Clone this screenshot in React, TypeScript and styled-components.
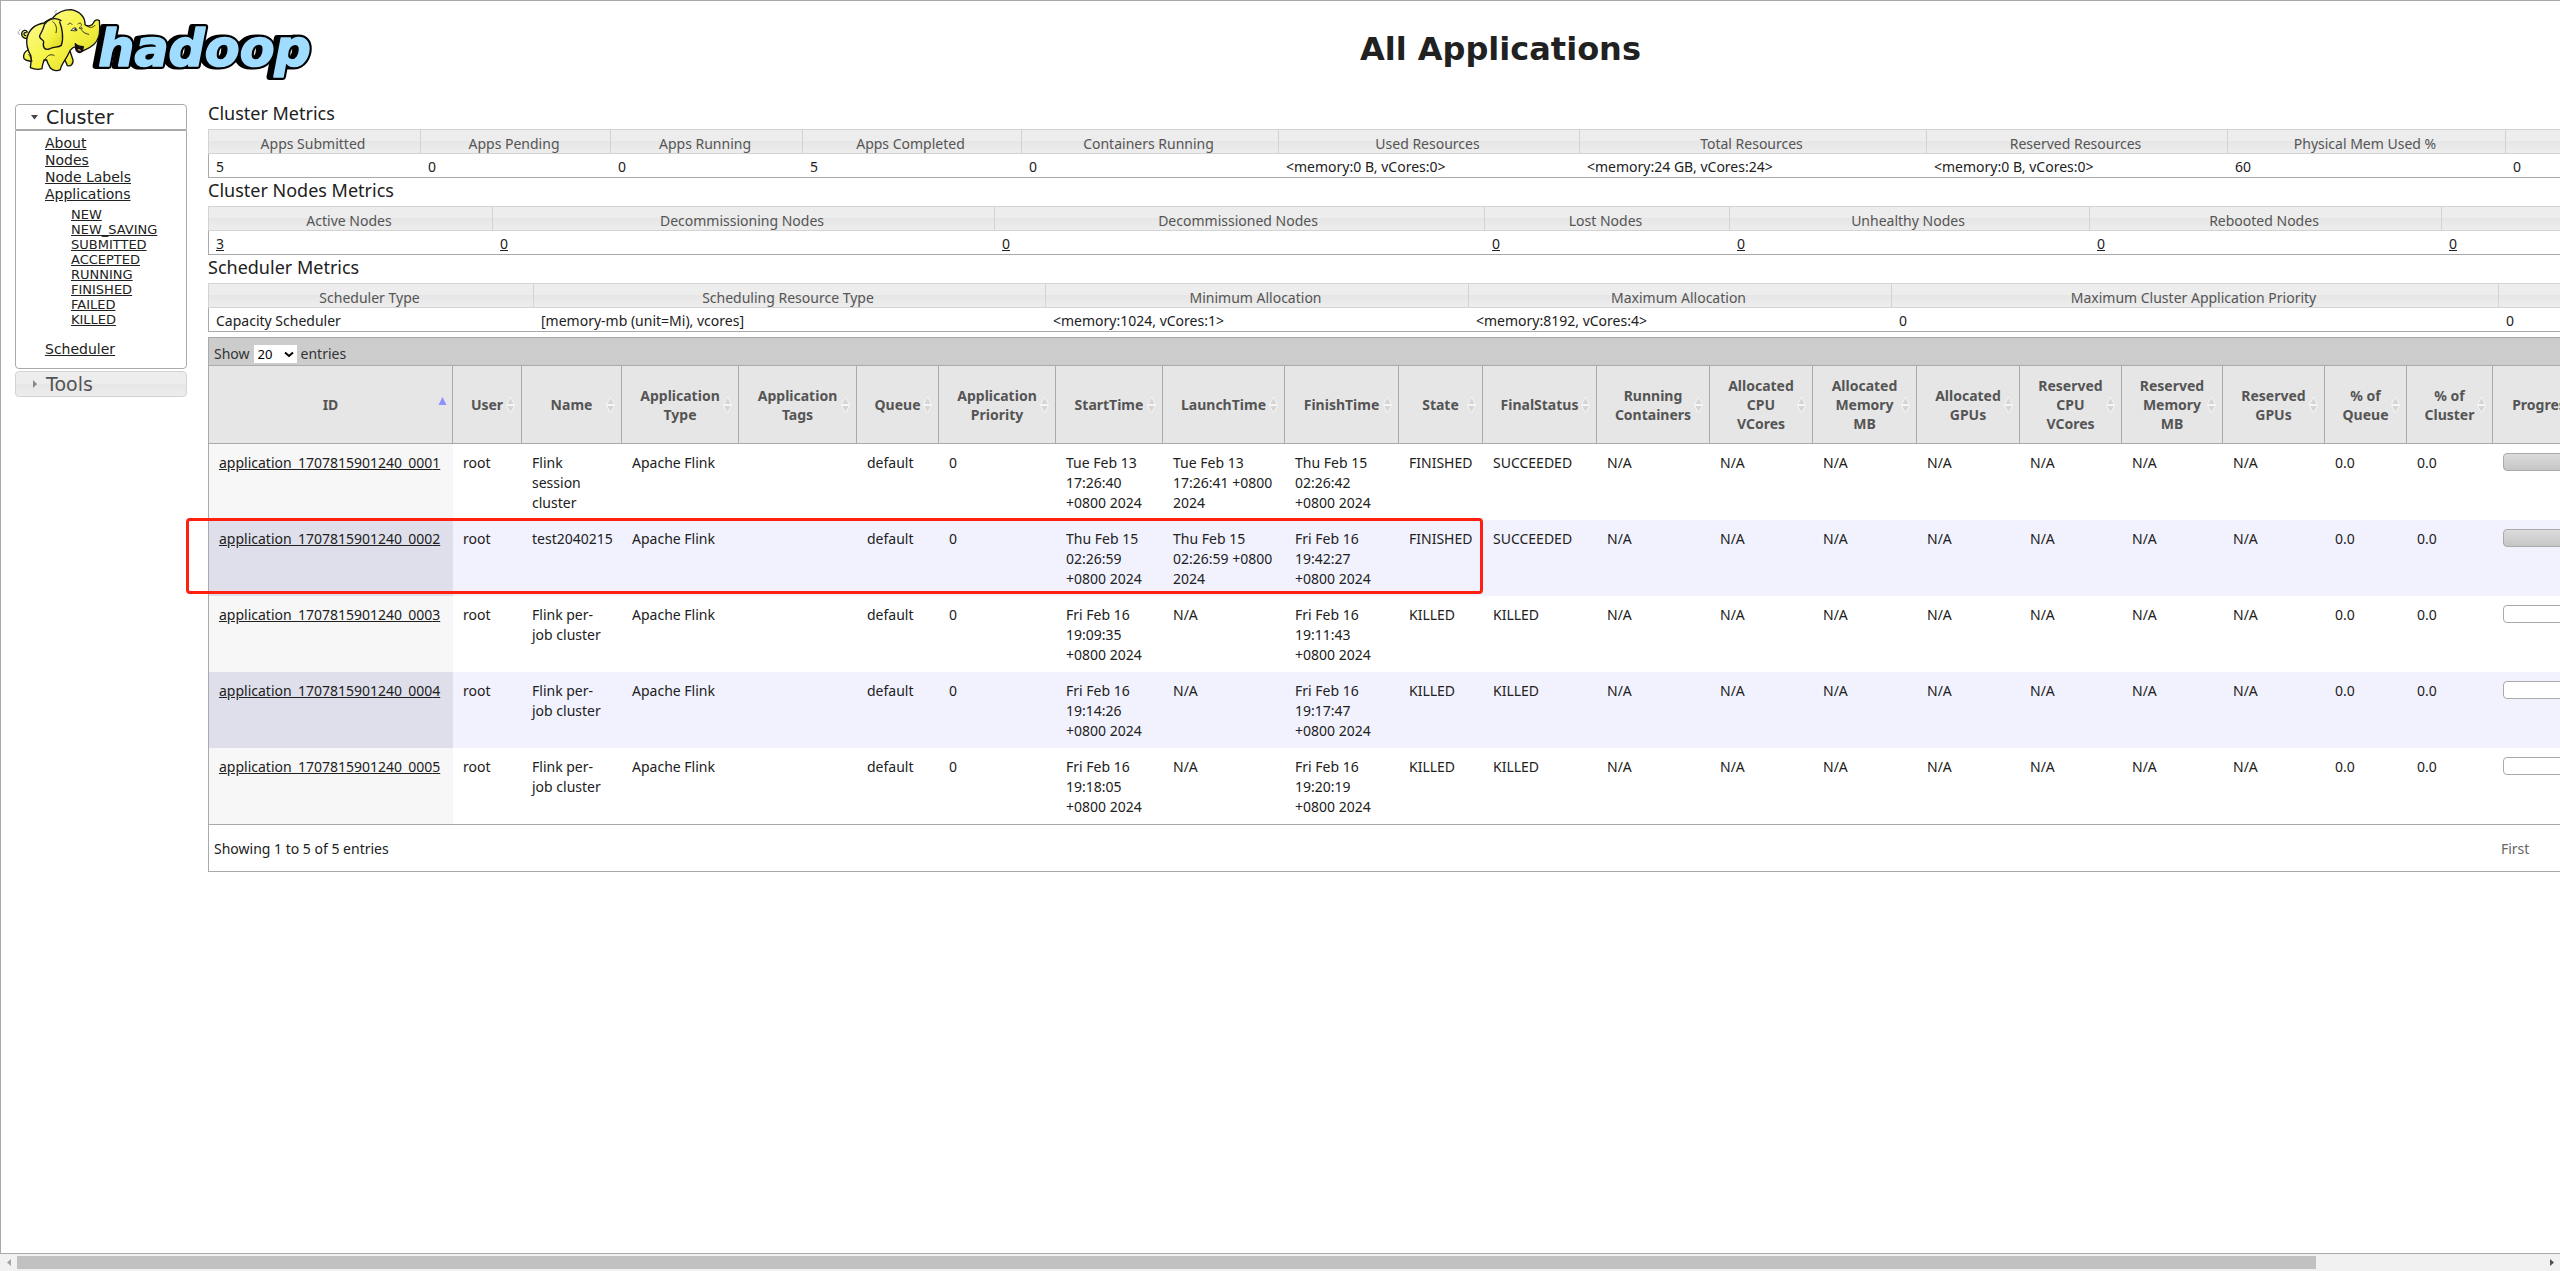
import React from "react";
import styled, { createGlobalStyle } from "styled-components";

const uiFont = `"Noto Sans", "Open Sans", sans-serif`;
const wideFont = `"DejaVu Sans", Verdana, sans-serif`;

const GlobalStyle = createGlobalStyle`
  *, *::before, *::after { box-sizing: border-box; }
  body { margin: 0; background: #fff; color: #212121; font: 14px/20px ${uiFont}; }
  a { color: inherit; }
`;

const Window = styled.div`
  display: flex;
  flex-direction: column;
  height: 100vh;
  overflow: hidden;
`;

const Viewport = styled.div`
  flex: 1;
  min-height: 0;
  overflow: hidden;
  border: solid #aaa;
  border-width: 1px 0 1px 1px;
`;

const Sheet = styled.div`
  width: 110%;
`;

const Header = styled.header`
  display: flex;
  height: 100px;
`;

const Title = styled.h1`
  flex: 1;
  margin: 29px 0 0 -144px;
  text-align: center;
  font: bold 32px/38px ${wideFont};
`;

const Columns = styled.div`
  display: flex;
  align-items: flex-start;
  gap: 21px;
  padding: 0 14px;
`;

const Sidebar = styled.nav`
  flex: none;
  width: 172px;
  padding-top: 3px;
  font-family: ${wideFont};
`;

const glass = `linear-gradient(#ededed 50%, #e6e6e6 50%, #ededed)`;

const NavHeading = styled.button<{ $open?: boolean }>`
  display: flex;
  align-items: center;
  gap: 7px;
  width: 100%;
  height: 26px;
  padding: 0 0 0 14px;
  border: 1px solid ${(p) => (p.$open ? "#aaa" : "#d3d3d3")};
  border-radius: ${(p) => (p.$open ? "4px 4px 0 0" : "4px")};
  background: ${(p) => (p.$open ? "#fff" : glass)};
  color: ${(p) => (p.$open ? "#212121" : "#555")};
  font: 19px/24px ${wideFont};
  text-align: left;
`;

const NavBody = styled.div`
  height: 239px;
  margin-bottom: 2px;
  padding: 4px 0 0 29px;
  border: 1px solid #aaa;
  border-radius: 0 0 4px 4px;
  font-size: 14px;
  line-height: 17px;
`;

const NavList = styled.ul`
  margin: 0;
  padding: 0;
  list-style: none;
`;

const StateList = styled(NavList)`
  padding: 4px 0 14px 26px;
  font-size: 13px;
  line-height: 15px;
`;

const Main = styled.main`
  flex: 1;
  min-width: 0;
`;

const SectionTitle = styled.h2`
  margin: 0 0 4px;
  font: 18px/24px ${uiFont};
`;

const MetricTable = styled.table`
  width: 100%;
  table-layout: fixed;
  border-collapse: separate;
  border-spacing: 0;
`;

const MetricHead = styled.th`
  height: 25px;
  padding: 4px 3px 0 0;
  border: solid #d3d3d3;
  border-width: 1px 1px 1px 0;
  background: ${glass};
  color: #555;
  font-weight: normal;
  line-height: 19px;
  &:first-child { border-left-width: 1px; }
`;

const MetricCell = styled.td`
  height: 24px;
  padding: 3px 7px 0;
  border-bottom: 1px solid #aaa;
  line-height: 20px;
  white-space: nowrap;
  &:first-child { border-left: 1px solid #aaa; }
`;

const Panel = styled.section`
  position: relative;
  margin-top: 5px;
  border: 1px solid #aaa;
`;

const Toolbar = styled.div`
  display: flex;
  align-items: center;
  gap: 4px;
  height: 27px;
  padding: 5px 5px 0;
  background: #ccc;
  color: #333;
`;

const SelectBox = styled.span`
  display: flex;
  align-items: center;
  width: 43px;
  height: 18px;
  background: #fff;
`;

const Select = styled.select`
  appearance: none;
  width: 30px;
  height: 18px;
  padding: 0 0 0 4px;
  border: 0;
  background: transparent;
  color: #000;
  font: 13px/18px ${uiFont};
`;

const AppTable = styled.table`
  width: 100%;
  table-layout: fixed;
  border-collapse: separate;
  border-spacing: 0;
`;

const AppHead = styled.th`
  position: relative;
  height: 79px;
  padding: 0;
  border: solid #aaa;
  border-width: 1px 1px 1px 0;
  background: #e6e6e6;
  color: #555;
  font-weight: bold;
  line-height: 19px;
  white-space: pre-line;
`;

const SortMark = styled.span`
  position: absolute;
  top: 0;
  right: 5px;
  bottom: 0;
  display: flex;
  align-items: center;
`;

const AppRow = styled.tr`
  &:nth-child(even) { background: #f2f2ff; }
  & > td:first-child { background: #f7f7f7; }
  &:nth-child(even) > td:first-child { background: #dfdfeb; }
`;

const AppCell = styled.td`
  height: 76px;
  padding: 9px 10px 7px;
  vertical-align: top;
  white-space: pre-line;
`;

const Progress = styled.div<{ $done: boolean }>`
  width: 80px;
  height: 18px;
  border: 1px solid #aaa;
  border-radius: 4px;
  background: ${(p) => (p.$done ? "linear-gradient(#dcdcdc, #c6c6c6)" : "#fff")};
`;

const Footer = styled.div`
  display: flex;
  align-items: center;
  justify-content: space-between;
  height: 47px;
  padding: 2px 5px 0;
  border-top: 1px solid #aaa;
`;

const Pager = styled.div`
  width: 295px;
`;

const PageButton = styled.button`
  padding: 0;
  border: 0;
  background: none;
  color: #666;
  font: 14px/20px ${uiFont};
`;

const Highlight = styled.div`
  position: absolute;
  top: 180px;
  left: -23px;
  width: 1297px;
  height: 76px;
  border: 3px solid #ff2010;
  border-radius: 4px;
  pointer-events: none;
`;

const ScrollBar = styled.div`
  display: flex;
  align-items: center;
  flex: none;
  height: 17px;
  background: #f1f1f1;
`;

const ScrollTrack = styled.div`
  flex: 1;
  height: 13px;
`;

const ScrollThumb = styled.div`
  width: 91%;
  height: 100%;
  background: #c1c1c1;
`;

const ScrollArrow = styled.button`
  display: flex;
  align-items: center;
  justify-content: center;
  width: 17px;
  height: 17px;
  padding: 0;
  border: 0;
  background: none;
`;

function Logo() {
  const word = {
    fontFamily: "DejaVu Sans, sans-serif",
    fontSize: 152,
    fontWeight: "bold",
    fontStyle: "italic",
    strokeLinejoin: "round" as const,
  };
  return (
    <svg width="328" height="84" viewBox="3 3 984 252" role="img" aria-label="Hadoop">
      <defs>
        <linearGradient id="hide" x1="0" y1="0" x2="1" y2="1">
          <stop offset="0" stopColor="#fbfb9c" />
          <stop offset=".5" stopColor="#f7f447" />
          <stop offset="1" stopColor="#d8d51b" />
        </linearGradient>
      </defs>
      <text {...word} x="282" y="199" fill="#000" stroke="#000" strokeWidth="18" aria-hidden="true">hadoop</text>
      <text {...word} x="295" y="199" fill="#000" stroke="#000" strokeWidth="18" aria-hidden="true">hadoop</text>
      <text {...word} x="295" y="199" fill="#a0dcff" stroke="#a0dcff" strokeWidth="5">hadoop</text>
      <g stroke="#111" strokeWidth="4" strokeLinejoin="round" strokeLinecap="round" fill="url(#hide)">
        <path d="M88 112C78 120 64 112 65 100C67 90 78 88 82 96M78 98C70 96 70 106 77 107" />
        <path d="M54 96l4 8M60 89l-3 4M164 36l6-5M166 42l3-4" stroke="#777" strokeWidth="2" />
        <path d="M84 150C74 154 68 166 72 176C78 184 86 182 94 184L108 150Z" />
        <path d="M186 168C196 176 198 188 202 197C212 199 221 193 219 180L210 154Z" />
        <path d="M132 69C102 74 86 92 81 114C77 136 84 152 92 166C96 178 92 192 91 203C102 208 117 209 126 206C126 196 130 190 132 180L140 180C142 190 148 198 152 205C160 213 174 214 181 209C184 190 202 174 207 158C210 148 222 140 226 142C232 152 246 156 252 151C270 144 290 132 296 110C301 94 299 76 298 62C291 57 283 61 280 69C277 76 264 82 255 74C256 52 240 34 213 29C190 29 170 40 158 54C146 60 138 62 132 69Z" />
        <path d="M183 62C162 48 142 60 133 74C131 88 124 96 119 107C116 118 132 118 131 126C127 142 134 151 148 147C160 140 174 143 184 136C192 114 186 82 179 66" />
        <path d="M158 64C168 72 172 84 168 98M134 183C138 168 150 160 162 166M96 184C94 174 90 168 86 164M266 103C258 101 250 98 246 92M204 74C206 68 212 68 216 73M234 72C240 66 246 70 244 76M262 78C270 86 280 82 285 76" fill="none" strokeWidth="2.5" />
        <path d="M214 91C220 80 230 82 231 91C226 94 220 92 214 91ZM238 83C242 78 248 82 246 87Z" fill="#fff" strokeWidth="2.5" />
        <circle cx="226" cy="88" r="3" fill="#111" stroke="none" />
        <path d="M226 131C232 138 242 140 250 140L247 154C238 162 228 156 227 146Z" fill="#111" />
        <path d="M232 150C236 144 243 148 243 154Z" fill="#e99b4c" stroke="none" />
      </g>
    </svg>
  );
}

const states = ["NEW", "NEW_SAVING", "SUBMITTED", "ACCEPTED", "RUNNING", "FINISHED", "FAILED", "KILLED"];

type Metric = { label: string; value: string; width?: number };

const clusterMetrics: Metric[] = [
  { label: "Apps Submitted", value: "5", width: 213 },
  { label: "Apps Pending", value: "0", width: 190 },
  { label: "Apps Running", value: "0", width: 192 },
  { label: "Apps Completed", value: "5", width: 219 },
  { label: "Containers Running", value: "0", width: 257 },
  { label: "Used Resources", value: "<memory:0 B, vCores:0>", width: 301 },
  { label: "Total Resources", value: "<memory:24 GB, vCores:24>", width: 347 },
  { label: "Reserved Resources", value: "<memory:0 B, vCores:0>", width: 301 },
  { label: "Physical Mem Used %", value: "60", width: 278 },
  { label: "", value: "0" },
];

const nodeMetrics: Metric[] = [
  { label: "Active Nodes", value: "3", width: 285 },
  { label: "Decommissioning Nodes", value: "0", width: 502 },
  { label: "Decommissioned Nodes", value: "0", width: 490 },
  { label: "Lost Nodes", value: "0", width: 245 },
  { label: "Unhealthy Nodes", value: "0", width: 360 },
  { label: "Rebooted Nodes", value: "0", width: 352 },
  { label: "", value: "0" },
];

const schedulerMetrics: Metric[] = [
  { label: "Scheduler Type", value: "Capacity Scheduler", width: 326 },
  { label: "Scheduling Resource Type", value: "[memory-mb (unit=Mi), vcores]", width: 512 },
  { label: "Minimum Allocation", value: "<memory:1024, vCores:1>", width: 423 },
  { label: "Maximum Allocation", value: "<memory:8192, vCores:4>", width: 423 },
  { label: "Maximum Cluster Application Priority", value: "0", width: 607 },
  { label: "", value: "0" },
];

const appColumns: [string, number?][] = [
  ["ID", 244], ["User", 69], ["Name", 100], ["Application\nType", 117], ["Application\nTags", 118],
  ["Queue", 82], ["Application\nPriority", 117], ["StartTime", 107], ["LaunchTime", 122],
  ["FinishTime", 114], ["State", 84], ["FinalStatus", 114], ["Running\nContainers", 113],
  ["Allocated\nCPU\nVCores", 103], ["Allocated\nMemory\nMB", 104], ["Allocated\nGPUs", 103],
  ["Reserved\nCPU\nVCores", 102], ["Reserved\nMemory\nMB", 101], ["Reserved\nGPUs", 102],
  ["% of\nQueue", 82], ["% of\nCluster", 86], ["Progress", 100], [""],
];

const apps = [
  { n: 1, name: "Flink\nsession\ncluster", start: "Tue Feb 13\n17:26:40\n+0800 2024", launch: "Tue Feb 13\n17:26:41 +0800\n2024", finish: "Thu Feb 15\n02:26:42\n+0800 2024", state: "FINISHED", final: "SUCCEEDED" },
  { n: 2, name: "test2040215", start: "Thu Feb 15\n02:26:59\n+0800 2024", launch: "Thu Feb 15\n02:26:59 +0800\n2024", finish: "Fri Feb 16\n19:42:27\n+0800 2024", state: "FINISHED", final: "SUCCEEDED" },
  { n: 3, name: "Flink per-\njob cluster", start: "Fri Feb 16\n19:09:35\n+0800 2024", launch: "N/A", finish: "Fri Feb 16\n19:11:43\n+0800 2024", state: "KILLED", final: "KILLED" },
  { n: 4, name: "Flink per-\njob cluster", start: "Fri Feb 16\n19:14:26\n+0800 2024", launch: "N/A", finish: "Fri Feb 16\n19:17:47\n+0800 2024", state: "KILLED", final: "KILLED" },
  { n: 5, name: "Flink per-\njob cluster", start: "Fri Feb 16\n19:18:05\n+0800 2024", launch: "N/A", finish: "Fri Feb 16\n19:20:19\n+0800 2024", state: "KILLED", final: "KILLED" },
];

function Metrics({ title, items, linked }: { title: string; items: Metric[]; linked?: boolean }) {
  return (
    <section>
      <SectionTitle>{title}</SectionTitle>
      <MetricTable>
        <colgroup>{items.map((m, i) => <col key={i} width={m.width} />)}</colgroup>
        <thead><tr>{items.map((m, i) => <MetricHead key={i}>{m.label}</MetricHead>)}</tr></thead>
        <tbody>
          <tr>
            {items.map((m, i) => (
              <MetricCell key={i}>{linked ? <a href="#nodes">{m.value}</a> : m.value}</MetricCell>
            ))}
          </tr>
        </tbody>
      </MetricTable>
    </section>
  );
}

function SortIcon({ active }: { active: boolean }) {
  return (
    <SortMark>
      {active ? (
        <svg width="9" height="17" viewBox="0 0 9 17"><path d="M4.500 1L8.500 9H.5Z" fill="#8c91ff" /></svg>
      ) : (
        <svg width="11" height="18" viewBox="0 0 11 18">
          <path d="M5.500 1L9.500 8.500H1.500ZM5.500 17L9.500 9.500H1.500Z" fill="#d6d6d6" stroke="#f6f6f6" strokeWidth="1" />
        </svg>
      )}
    </SortMark>
  );
}

export default function App() {
  return (
    <Window>
      <GlobalStyle />
      <Viewport>
        <Sheet>
          <Header>
            <Logo />
            <Title>All Applications</Title>
          </Header>
          <Columns>
            <Sidebar>
              <NavHeading $open>
                <svg width="9" height="5" viewBox="0 0 9 5"><path d="M1 0h7L4.500 4.500Z" fill="#454545" /></svg>
                Cluster
              </NavHeading>
              <NavBody>
                <NavList>
                  <li><a href="#about">About</a></li>
                  <li><a href="#nodes">Nodes</a></li>
                  <li><a href="#labels">Node Labels</a></li>
                  <li>
                    <a href="#apps">Applications</a>
                    <StateList>{states.map((s) => <li key={s}><a href={"#" + s}>{s}</a></li>)}</StateList>
                  </li>
                  <li><a href="#scheduler">Scheduler</a></li>
                </NavList>
              </NavBody>
              <NavHeading>
                <svg width="9" height="8" viewBox="0 0 9 8"><path d="M3 0v8L7 4Z" fill="#888" /></svg>
                Tools
              </NavHeading>
            </Sidebar>
            <Main>
              <Metrics title="Cluster Metrics" items={clusterMetrics} />
              <Metrics title="Cluster Nodes Metrics" items={nodeMetrics} linked />
              <Metrics title="Scheduler Metrics" items={schedulerMetrics} />
              <Panel>
                <Toolbar>
                  <label htmlFor="page-size">Show</label>
                  <SelectBox>
                    <Select id="page-size" defaultValue="20">
                      <option>20</option>
                      <option>40</option>
                    </Select>
                    <svg width="10" height="7" viewBox="0 0 10 7"><path d="M1 1.500L5 5L9 1.500" fill="none" stroke="#000" strokeWidth="2" /></svg>
                  </SelectBox>
                  <span>entries</span>
                </Toolbar>
                <AppTable>
                  <colgroup>{appColumns.map(([, w], i) => <col key={i} width={w} />)}</colgroup>
                  <thead>
                    <tr>
                      {appColumns.map(([label], i) => (
                        <AppHead key={i}>{label}<SortIcon active={i === 0} /></AppHead>
                      ))}
                    </tr>
                  </thead>
                  <tbody>
                    {apps.map((a) => (
                      <AppRow key={a.n}>
                        <AppCell><a href={"#app" + a.n}>application_1707815901240_000{a.n}</a></AppCell>
                        <AppCell>root</AppCell>
                        <AppCell>{a.name}</AppCell>
                        <AppCell>Apache Flink</AppCell>
                        <AppCell />
                        <AppCell>default</AppCell>
                        <AppCell>0</AppCell>
                        <AppCell>{a.start}</AppCell>
                        <AppCell>{a.launch}</AppCell>
                        <AppCell>{a.finish}</AppCell>
                        <AppCell>{a.state}</AppCell>
                        <AppCell>{a.final}</AppCell>
                        {appColumns.slice(12, 19).map(([c]) => <AppCell key={c}>N/A</AppCell>)}
                        <AppCell>0.0</AppCell>
                        <AppCell>0.0</AppCell>
                        <AppCell><Progress $done={a.state === "FINISHED"} /></AppCell>
                        <AppCell />
                      </AppRow>
                    ))}
                  </tbody>
                </AppTable>
                <Footer>
                  <span>Showing 1 to 5 of 5 entries</span>
                  <Pager><PageButton>First</PageButton></Pager>
                </Footer>
                <Highlight />
              </Panel>
            </Main>
          </Columns>
        </Sheet>
      </Viewport>
      <ScrollBar>
        <ScrollArrow aria-label="Scroll left">
          <svg width="4" height="7" viewBox="0 0 4 7"><path d="M4 0v7L0 3.500Z" fill="#a3a3a3" /></svg>
        </ScrollArrow>
        <ScrollTrack><ScrollThumb /></ScrollTrack>
        <ScrollArrow aria-label="Scroll right">
          <svg width="4" height="7" viewBox="0 0 4 7"><path d="M0 0v7L4 3.500Z" fill="#505050" /></svg>
        </ScrollArrow>
      </ScrollBar>
    </Window>
  );
}
